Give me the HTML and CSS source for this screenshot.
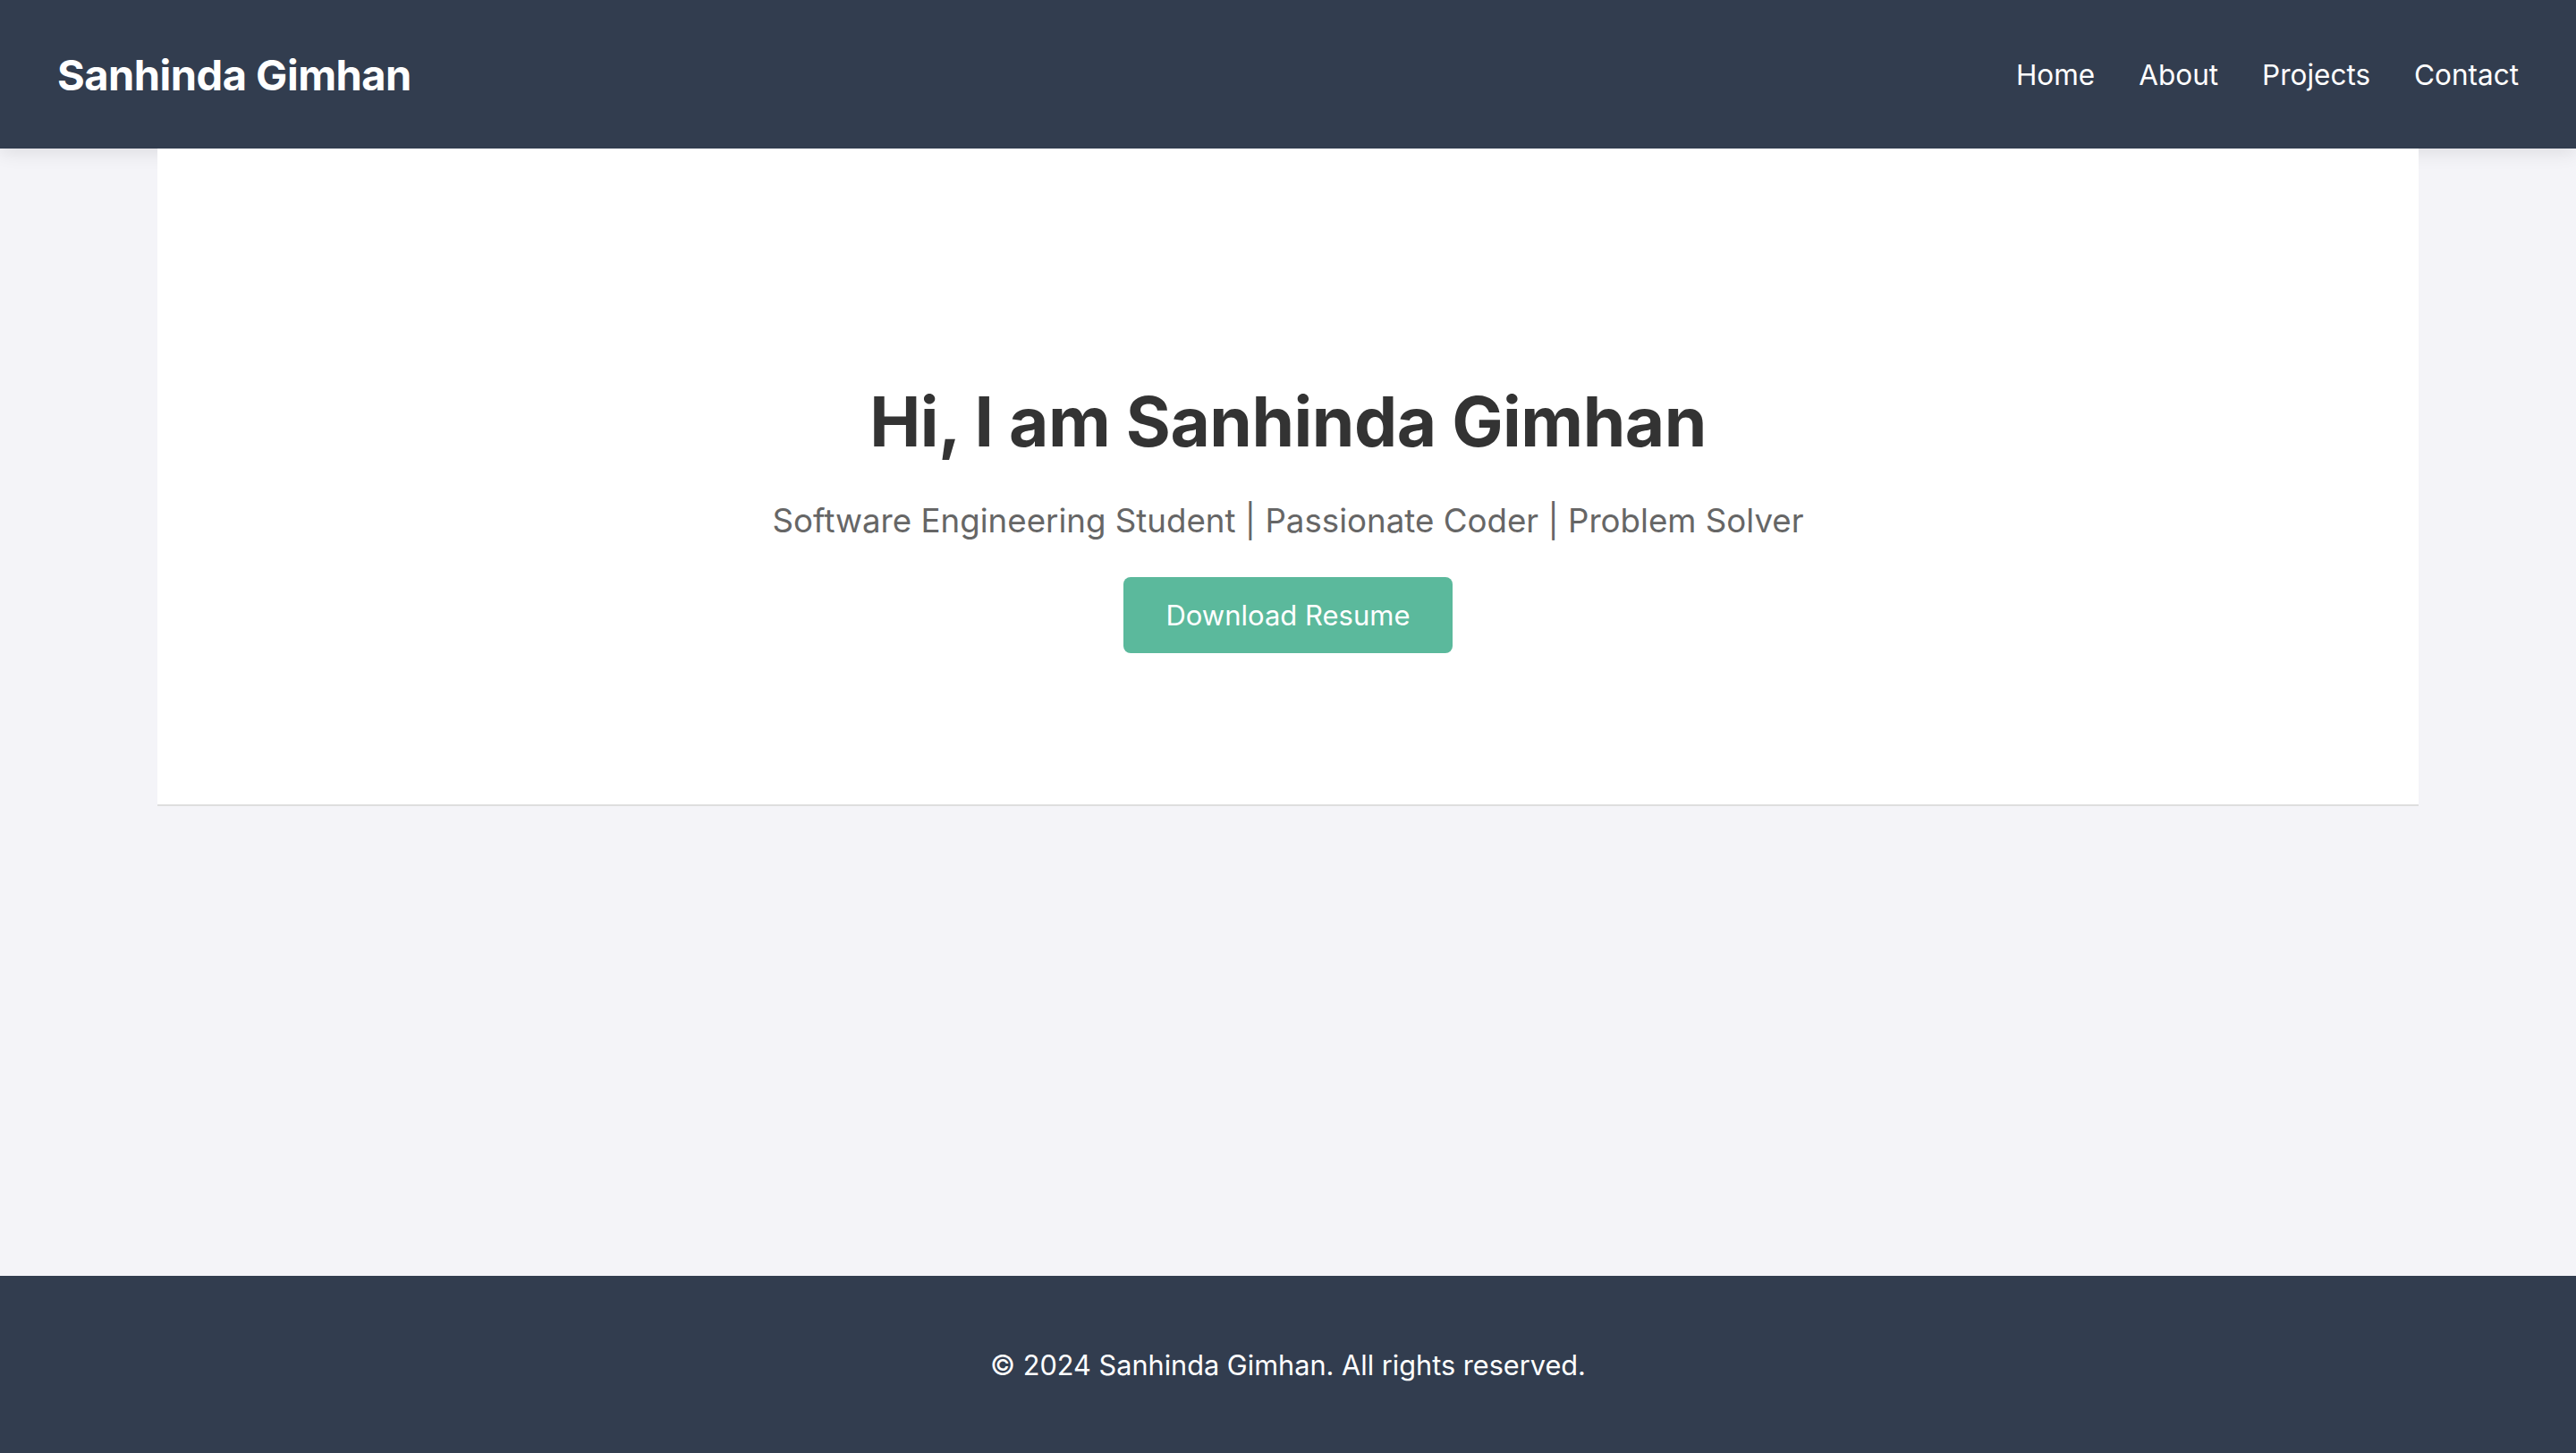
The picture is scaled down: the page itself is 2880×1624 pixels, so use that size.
FILE: index.html
```html
<!DOCTYPE html>
<html lang="en">
<head>
<meta charset="utf-8">
<title>Sanhinda Gimhan</title>
<link rel="stylesheet" href="styles.css">
</head>
<body>
<header class="site-header">
  <div class="logo">Sanhinda Gimhan</div>
  <nav class="nav">
    <a href="#">Home</a>
    <a href="#">About</a>
    <a href="#">Projects</a>
    <a href="#">Contact</a>
  </nav>
</header>
<main class="main">
  <section class="hero">
    <h1 class="hero-title">Hi, I am Sanhinda Gimhan</h1>
    <p class="hero-sub">Software Engineering Student | Passionate Coder | Problem Solver</p>
    <a class="btn" href="#">Download Resume</a>
  </section>
</main>
<footer class="site-footer">
  <p>© 2024 Sanhinda Gimhan. All rights reserved.</p>
</footer>
</body>
</html>
```

FILE: styles.css
```css
* { box-sizing: border-box; }
html, body { margin: 0; padding: 0; }
body {
  font-family: Inter, "Noto Sans", sans-serif;
  background: #f4f4f8;
  color: #333;
  min-height: 100vh;
  display: flex;
  flex-direction: column;
}
.site-header {
  height: 166px;
  background: #323d4f;
  display: flex;
  align-items: center;
  justify-content: space-between;
  padding: 0 64px 0 64px;
  box-shadow: 0 4px 20px rgba(0,0,0,0.1);
}
.logo {
  color: #fff;
  font-size: 47px;
  font-weight: 700;
  letter-spacing: -0.5px;
}
.nav { display: flex; gap: 49px; }
.nav a {
  color: #fff;
  text-decoration: none;
  font-size: 31.5px;
  font-weight: 400;
}
.main { flex: 1; }
.hero {
  margin: 0 176px;
  background: #fff;
  border-bottom: 2px solid #dedede;
  height: 735px;
  padding-top: 257px;
  text-align: center;
}
.hero-title {
  margin: 0;
  font-size: 76.5px;
  line-height: 96px;
  font-weight: 700;
  color: #333;
  letter-spacing: -0.5px;
}
.hero-sub {
  margin: 40px 0 40px;
  font-size: 36.7px;
  line-height: 46px;
  color: #666;
}
.btn {
  display: inline-block;
  background: #5bb99c;
  color: #fff;
  text-decoration: none;
  font-size: 31px;
  line-height: 37px;
  padding: 24px 47px;
  border-radius: 8px;
}
.site-footer {
  height: 198px;
  background: #323d4f;
  color: #fff;
  display: flex;
  align-items: center;
  justify-content: center;
}
.site-footer p { margin: 0; font-size: 30.7px; }
```
